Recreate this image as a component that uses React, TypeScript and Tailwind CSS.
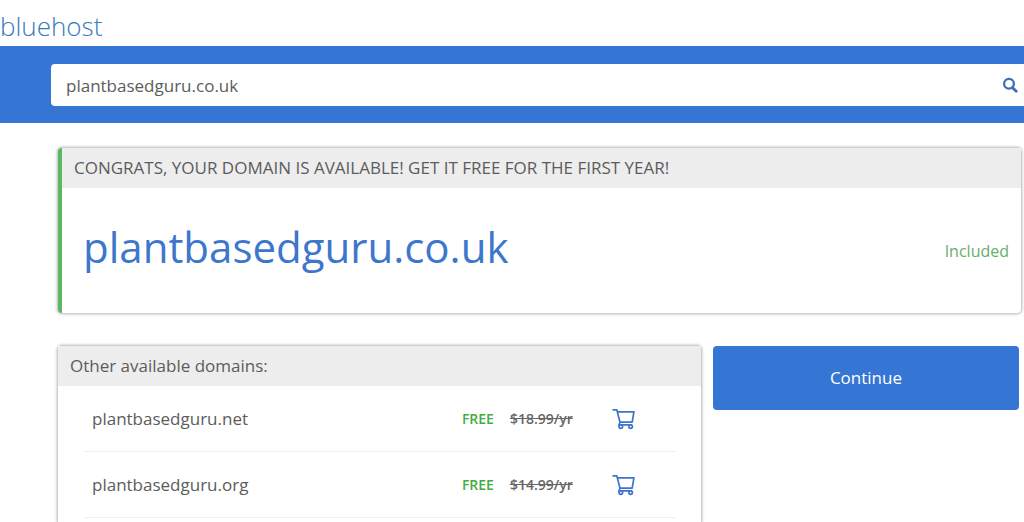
import { useState } from "react";
import type { FormEvent } from "react";

const suggestions = [
  { name: "plantbasedguru.net", price: "$18.99/yr" },
  { name: "plantbasedguru.org", price: "$14.99/yr" },
];

function SearchIcon() {
  return (
    <svg width="16" height="16" viewBox="0 0 16 16" fill="none" stroke="currentColor" aria-hidden="true">
      <circle cx="7" cy="6.7" r="4.9" strokeWidth="2.3" />
      <path d="M10.4 10.4 14.2 14.2" strokeWidth="2.8" strokeLinecap="round" />
    </svg>
  );
}

function CartIcon() {
  return (
    <svg width="24" height="22" viewBox="0 0 24 22" fill="none" stroke="currentColor" strokeWidth="1.7" aria-hidden="true">
      <path d="M.5 1.8h4.3L8 14.2h12.2L21.9 3.8H5.4" strokeLinejoin="round" />
      <path d="M8 14.2 7 16.8h13.2" />
      <circle cx="8.8" cy="18.6" r="1.8" fill="white" />
      <circle cx="18.6" cy="18.6" r="1.8" fill="white" />
    </svg>
  );
}

export default function App() {
  const [query, setQuery] = useState("plantbasedguru.co.uk");

  const handleSearch = (e: FormEvent) => {
    e.preventDefault();
  };

  return (
    <div className="flex min-h-screen flex-col overflow-hidden bg-white font-['Open_Sans',sans-serif] text-[17px] text-[#5c5c5c]">
      <header className="flex h-[46px] items-end pb-1">
        <a href="#" className="text-[26px] leading-8 font-light text-[#3b78b8]">bluehost</a>
      </header>

      <div className="bg-[#3575d3] pt-[18px] pb-[17px] pl-[51px]">
        <form onSubmit={handleSearch} className="flex h-[42px] items-center rounded-l bg-white">
          <input
            type="text"
            aria-label="Domain name"
            value={query}
            onChange={(e) => setQuery(e.target.value)}
            className="h-full min-w-0 flex-1 px-[15px] outline-none"
          />
          <button type="submit" aria-label="Search" className="px-1.5 text-[#3d6fb8]">
            <SearchIcon />
          </button>
        </form>
      </div>

      <main className="flex flex-1 flex-col pt-[25px] pl-[58px]">
        <section className="mr-[3px] rounded-sm border-l-4 border-[#5cb860] bg-white shadow-[0_0_3px_1px_rgba(0,0,0,0.3)]">
          <h2 className="bg-[#ededed] px-3 py-2 leading-6">CONGRATS, YOUR DOMAIN IS AVAILABLE! GET IT FREE FOR THE FIRST YEAR!</h2>
          <div className="flex h-[125px] items-center justify-between pr-3 pl-[21px]">
            <h1 className="pb-2 text-[42px] leading-none text-[#3d77cc]">plantbasedguru.co.uk</h1>
            <span className="text-base text-[#68ae6c]">Included</span>
          </div>
        </section>

        <div className="mt-[33px] flex flex-1 gap-3 pr-[5px]">
          <section className="flex-[21] rounded-t-sm bg-white shadow-[0_0_3px_1px_rgba(0,0,0,0.3)]">
            <h2 className="bg-[#ededed] px-3 py-2 leading-6">Other available domains:</h2>
            <div className="pr-[25px] pl-[26px]">
              <table aria-label="Other available domains" className="w-full border-separate border-spacing-0">
                <tbody>
                  {suggestions.map((s) => (
                    <tr key={s.name} className="h-[66px] *:border-b *:border-[#eeeeee]">
                      <td className="pl-2">{s.name}</td>
                      <td className="w-12 text-sm font-semibold text-[#3fae3f]">FREE</td>
                      <td className="w-[102px] text-sm font-semibold text-[#666666]">
                        <s>{s.price}</s>
                      </td>
                      <td className="w-16">
                        <button type="button" aria-label={`Add ${s.name} to cart`} className="block text-[#3d74cc]">
                          <CartIcon />
                        </button>
                      </td>
                    </tr>
                  ))}
                </tbody>
              </table>
            </div>
          </section>

          <aside className="flex-[10]">
            <button type="button" className="h-16 w-full rounded-sm bg-[#3575d3] text-white">
              Continue
            </button>
          </aside>
        </div>
      </main>
    </div>
  );
}
